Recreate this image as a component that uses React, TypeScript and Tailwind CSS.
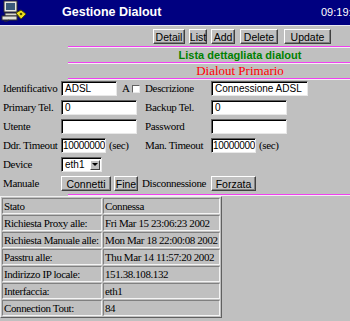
import React from 'react'

const sans = { fontFamily: '"Liberation Sans", Arial, sans-serif' }
const serif = { fontFamily: '"Liberation Serif", "Times New Roman", serif' }

const btn =
  'h-[15px] bg-[#c0c0c0] border border-t-white border-l-white border-r-[#404040] border-b-[#404040] shadow-[inset_-1px_-1px_0_#808080] text-[10.5px] leading-[12px] text-black flex items-center justify-center whitespace-nowrap'

const field =
  'h-[15px] bg-white border border-t-[#606060] border-l-[#606060] border-r-[#e8e8e8] border-b-[#e8e8e8] shadow-[inset_1px_1px_0_#000] text-[10px] leading-[13px] pl-[3px] text-black whitespace-nowrap overflow-hidden'

function Rule() {
  return (
    <div className="mx-auto w-[344px]">
      <div className="h-px bg-[#f040f0]" />
      <div className="h-px bg-[#f4eef4]" />
    </div>
  )
}

function Btn({ children, w }: { children: React.ReactNode; w: string }) {
  return (
    <div className={`${btn} ${w}`} style={sans}>
      {children}
    </div>
  )
}

function Field({ value, w }: { value?: string; w: string }) {
  return (
    <div className={`${field} ${w}`} style={sans}>
      {value}
    </div>
  )
}

function Label({ children, w }: { children: React.ReactNode; w: string }) {
  return (
    <div className={`${w} text-[11px] tracking-[-0.35px] text-black whitespace-nowrap`} style={serif}>
      {children}
    </div>
  )
}

function PcIcon() {
  return (
    <svg width="26" height="22" viewBox="0 0 26 22">
      <rect x="3" y="1" width="13" height="11" fill="#e8e8e0" stroke="#303030" strokeWidth="1" />
      <rect x="5" y="3" width="9" height="7" fill="#3a5a7a" />
      <rect x="4" y="13" width="12" height="3" fill="#d8d8d0" stroke="#303030" strokeWidth="1" />
      <rect x="1" y="16" width="15" height="4" fill="#e0e0d8" stroke="#303030" strokeWidth="1" />
      <path d="M15 13 L20 10 L25 14 L20 19 Z" fill="#f0e020" stroke="#505000" strokeWidth="1" />
      <circle cx="20" cy="14" r="1.3" fill="#505000" />
      <path d="M8 20 Q6 22 3 21" stroke="#303030" fill="none" />
    </svg>
  )
}

const rows: [string, string][] = [
  ['Stato', 'Connessa'],
  ['Richiesta Proxy alle:', 'Fri Mar 15 23:06:23 2002'],
  ['Richiesta Manuale alle:', 'Mon Mar 18 22:00:08 2002'],
  ['Passtru alle:', 'Thu Mar 14 11:57:20 2002'],
  ['Indirizzo IP locale:', '151.38.108.132'],
  ['Interfaccia:', 'eth1'],
  ['Connection Tout:', '84'],
]

const cell =
  'h-[16px] px-[1px] leading-none whitespace-nowrap border border-t-[#808080] border-l-[#808080] border-r-[#f4f4f4] border-b-[#f4f4f4]'

export default function App() {
  return (
    <div className="w-[350px] h-[321px] overflow-hidden bg-[#c0c0c0]">
      <div className="w-[480px]">
        {/* header */}
        <div className="h-[25px] bg-[#000080] flex items-center relative">
          <div className="absolute left-[1px] top-0">
            <PcIcon />
          </div>
          <div className="ml-[62px] w-[259px] text-white font-bold text-[12.5px] leading-none" style={sans}>
            Gestione Dialout
          </div>
          <div className="text-white text-[11px] leading-none" style={sans}>
            09:19:05
          </div>
        </div>
        <div className="h-px bg-[#e8e8f0]" />

        {/* toolbar */}
        <div className="flex justify-center gap-[4px] pt-[3px] pl-[4px]">
          <Btn w="w-[32px]">Detail</Btn>
          <Btn w="w-[18px]">List</Btn>
          <Btn w="w-[24px]">Add</Btn>
          <Btn w="w-[38px] ml-[1px]">Delete</Btn>
          <Btn w="w-[47px] ml-[2px]">Update</Btn>
        </div>

        <div className="h-[2px]" />
        <Rule />
        <div
          className="h-[14px] flex items-center justify-center text-[#008000] font-bold text-[11px]"
          style={sans}
        >
          Lista dettagliata dialout
        </div>
        <Rule />
        <div className="h-[14px] flex items-center justify-center text-[#ff0000] text-[13px]" style={serif}>
          Dialout Primario
        </div>
        <Rule />

        {/* form */}
        <div className="pl-[3px] mt-[-1px]">
          <div className="h-[19px] flex items-center">
            <Label w="w-[58px]">Identificativo</Label>
            <Field value="ADSL" w="w-[56px]" />
            <div className="w-[28px] flex items-center text-[11px] pl-[5px]" style={serif}>
              A
              <div className="ml-[2px] w-[8px] h-[8px] bg-white border border-t-[#606060] border-l-[#606060] border-r-[#e8e8e8] border-b-[#e8e8e8]" />
            </div>
            <Label w="w-[66px]">Descrizione</Label>
            <Field value="Connessione ADSL" w="w-[97px]" />
          </div>
          <div className="h-[19px] flex items-center">
            <Label w="w-[58px]">Primary Tel.</Label>
            <Field value="0" w="w-[76px]" />
            <div className="w-[8px]" />
            <Label w="w-[66px]">Backup Tel.</Label>
            <Field value="0" w="w-[76px]" />
          </div>
          <div className="h-[19px] flex items-center">
            <Label w="w-[58px]">Utente</Label>
            <Field w="w-[76px]" />
            <div className="w-[8px]" />
            <Label w="w-[66px]">Password</Label>
            <Field w="w-[76px]" />
          </div>
          <div className="h-[19px] flex items-center">
            <Label w="w-[58px]">Ddr. Timeout</Label>
            <Field value="10000000" w="w-[45px] !pl-[1px] tracking-[-0.3px]" />
            <Label w="w-[39px] pl-[3px]">(sec)</Label>
            <Label w="w-[66px]">Man. Timeout</Label>
            <Field value="10000000" w="w-[45px] !pl-[1px] tracking-[-0.3px]" />
            <Label w="w-[30px] pl-[3px]">(sec)</Label>
          </div>
          <div className="h-[19px] flex items-center">
            <Label w="w-[58px]">Device</Label>
            <div className={`${field} w-[41px] flex items-center justify-between !pr-[1px]`} style={sans}>
              <span>eth1</span>
              <div className="w-[10px] h-[10px] bg-[#c0c0c0] border border-t-white border-l-white border-r-[#404040] border-b-[#404040] flex items-center justify-center">
                <svg width="6" height="4" viewBox="0 0 6 4">
                  <path d="M0 0 H6 L3 3 Z" fill="#000" />
                </svg>
              </div>
            </div>
          </div>
          <div className="h-[19px] flex items-center">
            <Label w="w-[58px]">Manuale</Label>
            <Btn w="w-[50px]">Connetti</Btn>
            <div className="w-[3px]" />
            <Btn w="w-[24px]">Fine</Btn>
            <Label w="w-[73px] pl-[4px]">Disconnessione</Label>
            <Btn w="w-[45px]">Forzata</Btn>
          </div>
        </div>
        <div className="h-[1px]" />
        <Rule />

        {/* status table */}
        <table
          className="border-separate border-spacing-[1px] border border-t-[#f0f0f0] border-l-[#f0f0f0] border-r-[#606060] border-b-[#606060] text-[11px] tracking-[-0.4px] text-black"
          style={serif}
        >
          <tbody>
            {rows.map(([k, v]) => (
              <tr key={k}>
                <td className={`w-[100px] ${cell}`}>{k}</td>
                <td className={`w-[114px] ${cell}`}>{v}</td>
              </tr>
            ))}
          </tbody>
        </table>
      </div>
    </div>
  )
}
